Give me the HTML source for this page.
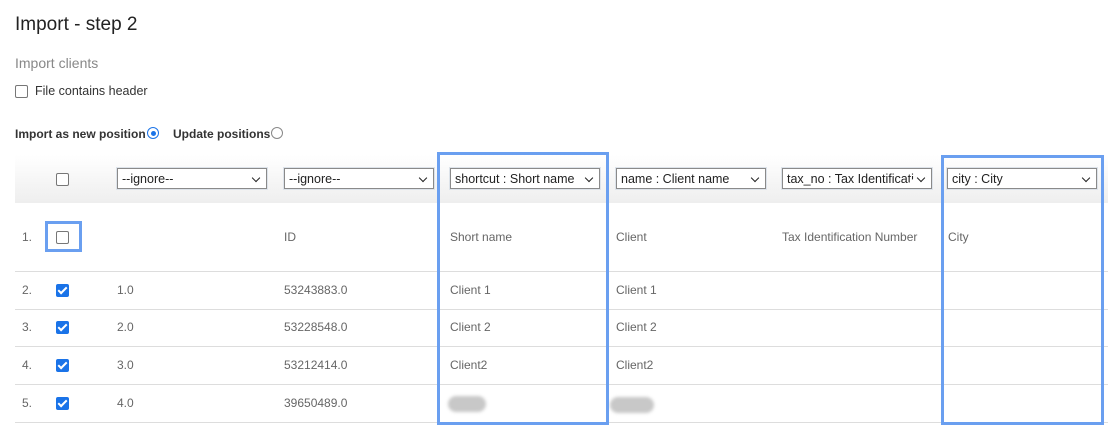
<!DOCTYPE html>
<html><head><style>
body{margin:0;width:1113px;height:435px;background:#fff;font-family:"Liberation Sans",Arial,sans-serif;position:relative;overflow:hidden}
.a{position:absolute;white-space:nowrap}
.t{font-size:12px;color:#666}
.sel{position:absolute;top:168px;width:148px;height:21px;border:1px solid #8a8a8a;box-shadow:0 0 0 1px #dde3ea;background:#fff;font-size:12.5px;color:#222;line-height:21px;padding-left:4px;box-sizing:border-box;overflow:hidden;white-space:nowrap}
.sel:after{content:"";position:absolute;right:7px;top:6px;width:5px;height:5px;border-right:1.5px solid #222;border-bottom:1.5px solid #222;transform:rotate(45deg);background:#fff;box-shadow:4px 4px 0 6px #fff}
.cb{position:absolute;width:11px;height:11px;border:1px solid #777;border-radius:2px;background:#fff}
.ck{position:absolute;width:13px;height:13px;background:#1a73e8;border-radius:2px}
.ck:after{content:"";position:absolute;left:4px;top:1px;width:3px;height:7px;border-right:2px solid #fff;border-bottom:2px solid #fff;transform:rotate(45deg)}
.line{position:absolute;left:15px;width:1093px;height:1px;background:#ddd}
.hl{position:absolute;border:3px solid #6a9ff0;box-sizing:border-box}
.blur{position:absolute;width:36px;height:16px;background:#c8c8c8;border-radius:8px;filter:blur(1.5px)}
</style></head><body>
<div class="a" style="left:15px;top:14px;font-size:19px;color:#222">Import - step 2</div>
<div class="a" style="left:15px;top:55px;font-size:14px;color:#888">Import clients</div>
<div class="cb" style="left:15px;top:85px"></div>
<div class="a" style="left:35px;top:84px;font-size:12.5px;color:#333">File contains header</div>
<div class="a" style="left:15px;top:127px;font-size:12px;font-weight:bold;color:#333">Import as new position</div>
<div class="a" style="left:147px;top:127px;width:10px;height:10px;border:1.5px solid #1a73e8;border-radius:50%"></div>
<div class="a" style="left:151px;top:131px;width:5px;height:5px;background:#1a73e8;border-radius:50%"></div>
<div class="a" style="left:173px;top:127px;font-size:12px;font-weight:bold;color:#333">Update positions</div>
<div class="a" style="left:271px;top:127px;width:10px;height:10px;border:1.5px solid #888;border-radius:50%"></div>
<div class="a" style="left:15px;top:155px;width:1093px;height:48px;background:linear-gradient(#fff,#eee)"></div>
<div class="cb" style="left:56px;top:173px"></div>
<div class="sel" style="left:117px;width:150px">--ignore--</div>
<div class="sel" style="left:284px;width:150px">--ignore--</div>
<div class="sel" style="left:450px;width:150px">shortcut : Short name</div>
<div class="sel" style="left:616px;width:150px">name : Client name</div>
<div class="sel" style="left:782px;width:150px">tax_no : Tax Identification</div>
<div class="sel" style="left:947px;width:150px">city : City</div>
<div class="a t" style="left:22px;top:230px">1.</div>
<div class="cb" style="left:56px;top:231px"></div>
<div class="a t" style="left:284px;top:230px">ID</div>
<div class="a t" style="left:450px;top:230px">Short name</div>
<div class="a t" style="left:616px;top:230px">Client</div>
<div class="a t" style="left:782px;top:230px">Tax Identification Number</div>
<div class="a t" style="left:948px;top:230px">City</div>
<div class="line" style="top:271px"></div>
<div class="line" style="top:309px"></div>
<div class="line" style="top:346px"></div>
<div class="line" style="top:384px"></div>
<div class="line" style="top:422px"></div>
<div class="a t" style="left:22px;top:283px">2.</div><div class="ck" style="left:56px;top:284px"></div>
<div class="a t" style="left:117px;top:283px">1.0</div><div class="a t" style="left:284px;top:283px">53243883.0</div>
<div class="a t" style="left:450px;top:283px">Client 1</div><div class="a t" style="left:616px;top:283px">Client 1</div>
<div class="a t" style="left:22px;top:320px">3.</div><div class="ck" style="left:56px;top:321px"></div>
<div class="a t" style="left:117px;top:320px">2.0</div><div class="a t" style="left:284px;top:320px">53228548.0</div>
<div class="a t" style="left:450px;top:320px">Client 2</div><div class="a t" style="left:616px;top:320px">Client 2</div>
<div class="a t" style="left:22px;top:358px">4.</div><div class="ck" style="left:56px;top:359px"></div>
<div class="a t" style="left:117px;top:358px">3.0</div><div class="a t" style="left:284px;top:358px">53212414.0</div>
<div class="a t" style="left:450px;top:358px">Client2</div><div class="a t" style="left:616px;top:358px">Client2</div>
<div class="a t" style="left:22px;top:396px">5.</div><div class="ck" style="left:56px;top:397px"></div>
<div class="a t" style="left:117px;top:396px">4.0</div><div class="a t" style="left:284px;top:396px">39650489.0</div>
<div class="blur" style="left:448px;top:396px;width:38px"></div>
<div class="blur" style="left:610px;top:397px;width:44px"></div>
<div class="hl" style="left:437px;top:152px;width:172px;height:273px"></div>
<div class="hl" style="left:941px;top:155px;width:163px;height:270px"></div>
<div class="hl" style="left:45px;top:221px;width:37px;height:31px"></div>
</body></html>
